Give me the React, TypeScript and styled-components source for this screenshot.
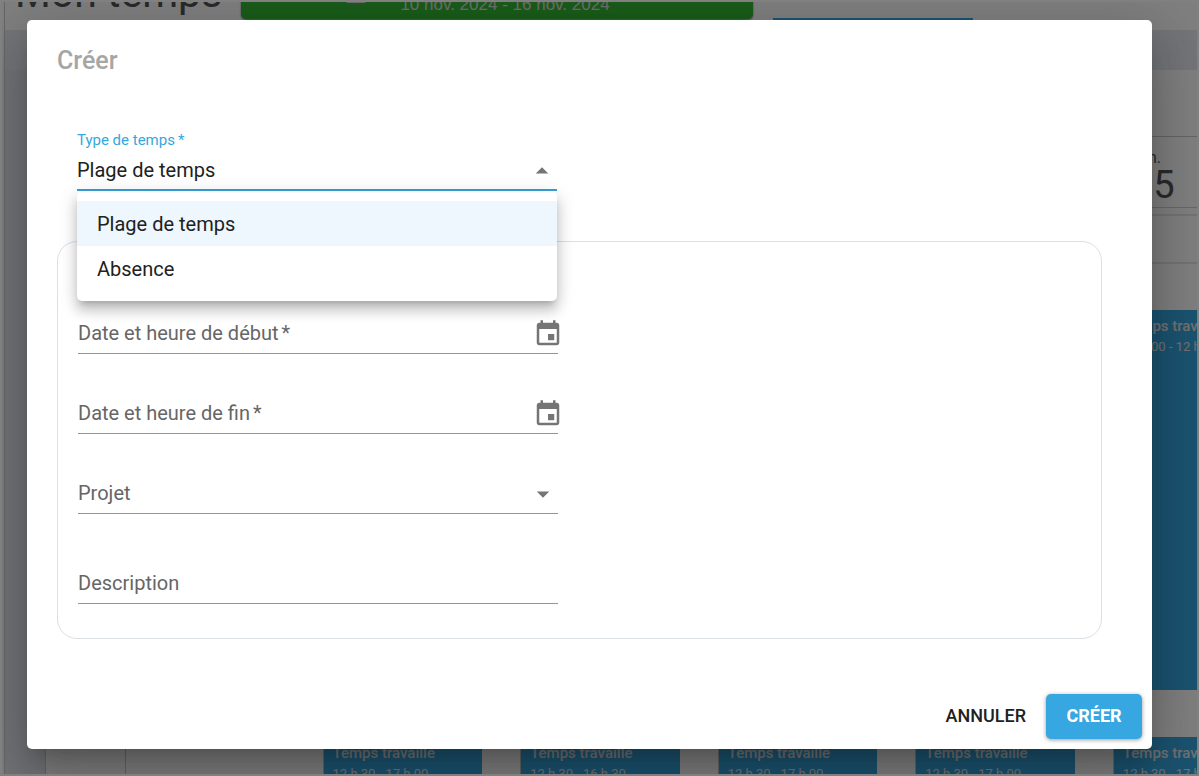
import React, { useState } from 'react';
import styled, { createGlobalStyle, css } from 'styled-components';

const blue = '#36a7e0';

const GlobalStyle = createGlobalStyle`
  *, *::before, *::after { box-sizing: border-box; }
  body {
    margin: 0;
    background: #808080;
    color: #212121;
    font-family: Roboto, "Liberation Sans", sans-serif;
  }
  button, input, select { font: inherit; color: inherit; }
`;

const Frame = styled.div`
  height: 100vh;
  padding: 2px;
  overflow: hidden;
`;

const Scene = styled.div`
  position: relative;
  height: 100%;
  overflow: hidden;
  background: #fff;
`;

/* ---------- time sheet behind the dialog ---------- */

const Page = styled.div`
  margin: -31px 0 0 2px;
  border-left: 1px solid #c9cdd2;
`;

const PageHeader = styled.header`
  display: flex;
  align-items: flex-start;
  height: 59px;
  padding-left: 10px;
`;

const PageTitle = styled.h1`
  width: 226px;
  margin: 0;
  font-size: 41px;
  line-height: 44px;
  font-weight: 400;
  color: #555;
`;

const WeekBar = styled.div`
  display: flex;
  align-items: flex-end;
  justify-content: center;
  width: 512px;
  height: 40px;
  margin: 8px 20px 0 0;
  border-radius: 5px;
  background: #35b935;
  box-shadow: 0 1px 2px rgba(0, 0, 0, 0.5);
  color: #ddd;
  font-family: "Liberation Sans", sans-serif;
  font-size: 17px;
  line-height: 28px;
`;

const WeekMark = styled.span`
  align-self: flex-start;
  width: 20px;
  height: 24px;
  margin-right: 34px;
  border: 2px solid #ddd;
  border-radius: 2px;
`;

const WeekText = styled.span`
  margin-right: 38px;
`;

const ActiveTab = styled.div`
  width: 200px;
  height: 49px;
  border-bottom: 2px solid ${blue};
`;

const Band = styled.div`
  height: 40px;
  background: #e8ebf0;
`;

const Body = styled.div`
  display: flex;
`;

const Sidebar = styled.div`
  flex: 0 0 40px;
  background: #e3e6ee;
`;

const Calendar = styled.div`
  display: grid;
  grid-template-columns: 80px repeat(7, 1fr);
  flex: 0 0 1463px;
  margin-top: 66px;
  border-top: 1px solid #c8c8c8;
`;

const Column = styled.div`
  border-left: 1px solid #c8c8c8;
`;

const DayHead = styled.div`
  height: 71px;
  margin-bottom: 6px;
  padding: 12px 0 0 18px;
  border-bottom: 1px solid #d0d0d0;
  color: #555;
`;

const DayName = styled.div`
  font-size: 16px;
  line-height: 18px;
`;

const DayNumber = styled.div`
  font-size: 38px;
  line-height: 36px;
`;

const Slot = styled.div`
  height: 48px;
  border-top: 2px solid #e6e6e6;
`;

const Event = styled.div<{ $long?: boolean }>`
  height: ${(p) => (p.$long ? 380 : 120)}px;
  margin: ${(p) => (p.$long ? '0 38px 0 0' : '47px 38px 0 0')};
  padding: 6px 9px;
  background: ${blue};
  color: #e4e4e4;
  white-space: nowrap;
`;

const EventName = styled.div`
  font-size: 15px;
  line-height: 20px;
  font-weight: 500;
`;

const EventTime = styled.div`
  font-size: 13px;
  line-height: 22px;
`;

const MorningGap = styled.div`
  height: 380px;
`;

/* ---------- dialog ---------- */

const Backdrop = styled.div`
  position: absolute;
  inset: 0;
  padding: 18px 45px 25px 25px;
  background: rgba(0, 0, 0, 0.5);
`;

const Dialog = styled.form`
  border-radius: 5px;
  background: #fff;
  box-shadow:
    0 14px 19px -9px rgba(0, 0, 0, 0.2),
    0 30px 48px 4px rgba(0, 0, 0, 0.14),
    0 11px 58px 10px rgba(0, 0, 0, 0.12);
`;

const DialogTitle = styled.h2`
  margin: 0;
  padding: 20px 30px 18px;
  color: #a6a6a6;
  font-size: 25px;
  line-height: 42px;
  font-weight: 500;
`;

const Content = styled.div`
  padding: 30px 50px 55px 30px;
`;

const TypeField = styled.div`
  position: relative;
  width: 480px;
  max-width: 100%;
  margin: 0 0 50px 20px;
`;

const TypeLabel = styled.label`
  display: block;
  height: 21px;
  color: ${blue};
  font-size: 15px;
  line-height: 20px;
`;

const Stack = styled.div`
  display: grid;
  align-items: center;
  > * { grid-area: 1 / 1; }
`;

const control = css`
  width: 100%;
  height: 40px;
  padding: 0;
  border: 0;
  border-radius: 0;
  outline: 0;
  background: transparent;
  font-size: 20px;
`;

const TypeSelect = styled.select`
  ${control}
  appearance: none;
  border-bottom: 2px solid #36a0d8;
`;

const Arrow = styled.svg<{ $up?: boolean }>`
  width: 30px;
  height: 30px;
  justify-self: end;
  fill: #757575;
  pointer-events: none;
  transform: ${(p) => (p.$up ? 'rotate(180deg)' : 'none')};
`;

const Menu = styled.ul`
  position: absolute;
  top: 100%;
  left: 0;
  right: 0;
  z-index: 1;
  margin: 0;
  padding: 10px 0;
  border-radius: 5px;
  background: #fff;
  list-style: none;
  box-shadow:
    0 6px 6px -4px rgba(0, 0, 0, 0.2),
    0 10px 12px 1px rgba(0, 0, 0, 0.14),
    0 4px 18px 2px rgba(0, 0, 0, 0.12);
`;

const MenuItem = styled.li<{ $selected: boolean }>`
  height: 45px;
  padding: 0 20px;
  background: ${(p) => (p.$selected ? '#eef7fd' : 'transparent')};
  font-size: 20px;
  line-height: 46px;
  cursor: pointer;
`;

const Panel = styled.div`
  display: flex;
  flex-direction: column;
  gap: 40px;
  padding: 72px 20px 34px;
  border: 1px solid #dbe0e5;
  border-radius: 20px;
`;

const Field = styled(Stack)<{ $spaced?: boolean }>`
  width: 480px;
  max-width: 100%;
  margin-top: ${(p) => (p.$spaced ? 10 : 0)}px;
`;

const FieldLabel = styled.label`
  align-self: start;
  color: #666;
  font-size: 20px;
  line-height: 38px;
  pointer-events: none;
`;

const Required = styled.span`
  margin-left: 3px;
`;

const TextInput = styled.input`
  ${control}
  border-bottom: 1px solid #949494;
`;

const PlainSelect = styled.select`
  ${control}
  appearance: none;
  border-bottom: 1px solid #949494;
`;

const IconButton = styled.button`
  display: flex;
  justify-self: end;
  margin-right: -5px;
  padding: 0;
  border: 0;
  background: none;
  color: #757575;
  cursor: pointer;
`;

const Actions = styled.div`
  display: flex;
  justify-content: flex-end;
  padding: 0 10px 10px;
`;

const ActionButton = styled.button<{ $primary?: boolean }>`
  height: 45px;
  min-width: 96px;
  padding: 0 20px 2px;
  border: 0;
  border-radius: 5px;
  background: ${(p) => (p.$primary ? blue : 'transparent')};
  color: ${(p) => (p.$primary ? '#fff' : '#212121')};
  box-shadow: ${(p) => (p.$primary ? '0 1px 4px rgba(0, 0, 0, 0.4)' : 'none')};
  font-size: 18px;
  line-height: 43px;
  font-weight: ${(p) => (p.$primary ? 700 : 500)};
  text-transform: uppercase;
  cursor: pointer;
`;

const DropArrow = ({ up }: { up?: boolean }) => (
  <Arrow $up={up} viewBox="0 0 24 24" aria-hidden="true">
    <path d="M7 10l5 5 5-5z" />
  </Arrow>
);

const CalendarIcon = () => (
  <svg width="30" height="30" viewBox="0 0 24 24" fill="currentColor" aria-hidden="true">
    <path d="M17 12h-5v5h5v-5zM16 1v2H8V1H6v2H5c-1.11 0-1.99.9-1.99 2L3 19c0 1.1.89 2 2 2h14c1.1 0 2-.9 2-2V5c0-1.1-.9-2-2-2h-1V1h-2zm3 18H5V8h14v11z" />
  </svg>
);

const DateField = ({ id, label }: { id: string; label: string }) => (
  <Field>
    <TextInput id={id} type="text" required />
    <FieldLabel htmlFor={id}>
      {label}
      <Required>*</Required>
    </FieldLabel>
    <IconButton type="button" aria-label={label}>
      <CalendarIcon />
    </IconButton>
  </Field>
);

type Day = { name?: string; number?: number; morning?: string; afternoon?: string };

const days: Day[] = [
  {},
  { afternoon: '12 h 30 - 17 h 00' },
  { afternoon: '12 h 30 - 16 h 30' },
  { afternoon: '12 h 30 - 17 h 00' },
  { afternoon: '12 h 30 - 17 h 00' },
  { name: 'ven.', number: 15, morning: '08 h 00 - 12 h 00', afternoon: '12 h 30 - 17 h 00' },
  {},
];

const DayColumn = ({ day }: { day: Day }) => (
  <Column>
    <DayHead>
      <DayName>{day.name}</DayName>
      <DayNumber>{day.number}</DayNumber>
    </DayHead>
    <Slot />
    <Slot />
    {day.morning ? (
      <Event $long>
        <EventName>Temps travaillé</EventName>
        <EventTime>{day.morning}</EventTime>
      </Event>
    ) : (
      <MorningGap />
    )}
    {day.afternoon && (
      <Event>
        <EventName>Temps travaillé</EventName>
        <EventTime>{day.afternoon}</EventTime>
      </Event>
    )}
  </Column>
);

const types = ['Plage de temps', 'Absence'];

export default function App() {
  const [type, setType] = useState(types[0]);

  return (
    <Frame>
      <GlobalStyle />
      <Scene>
        <Page aria-hidden="true">
          <PageHeader>
            <PageTitle>Mon temps</PageTitle>
            <WeekBar>
              <WeekMark />
              <WeekText>10 nov. 2024 - 16 nov. 2024</WeekText>
            </WeekBar>
            <ActiveTab />
          </PageHeader>
          <Band />
          <Body>
            <Sidebar />
            <Calendar>
              <Column />
              {days.map((day, i) => (
                <DayColumn key={i} day={day} />
              ))}
            </Calendar>
          </Body>
        </Page>

        <Backdrop>
          <Dialog role="dialog" aria-labelledby="dialog-title" onSubmit={(e) => e.preventDefault()}>
            <DialogTitle id="dialog-title">Créer</DialogTitle>
            <Content>
              <TypeField>
                <TypeLabel htmlFor="type">
                  Type de temps<Required>*</Required>
                </TypeLabel>
                <Stack>
                  <TypeSelect id="type" value={type} onChange={(e) => setType(e.target.value)}>
                    {types.map((t) => (
                      <option key={t}>{t}</option>
                    ))}
                  </TypeSelect>
                  <DropArrow up />
                </Stack>
                <Menu role="listbox" aria-label="Type de temps">
                  {types.map((t) => (
                    <MenuItem
                      key={t}
                      role="option"
                      aria-selected={t === type}
                      $selected={t === type}
                      onClick={() => setType(t)}
                    >
                      {t}
                    </MenuItem>
                  ))}
                </Menu>
              </TypeField>

              <Panel>
                <DateField id="start" label="Date et heure de début" />
                <DateField id="end" label="Date et heure de fin" />
                <Field>
                  <PlainSelect id="project" defaultValue="">
                    <option value="" />
                  </PlainSelect>
                  <FieldLabel htmlFor="project">Projet</FieldLabel>
                  <DropArrow />
                </Field>
                <Field $spaced>
                  <TextInput id="description" type="text" />
                  <FieldLabel htmlFor="description">Description</FieldLabel>
                </Field>
              </Panel>
            </Content>
            <Actions>
              <ActionButton type="button">Annuler</ActionButton>
              <ActionButton type="submit" $primary>
                Créer
              </ActionButton>
            </Actions>
          </Dialog>
        </Backdrop>
      </Scene>
    </Frame>
  );
}
